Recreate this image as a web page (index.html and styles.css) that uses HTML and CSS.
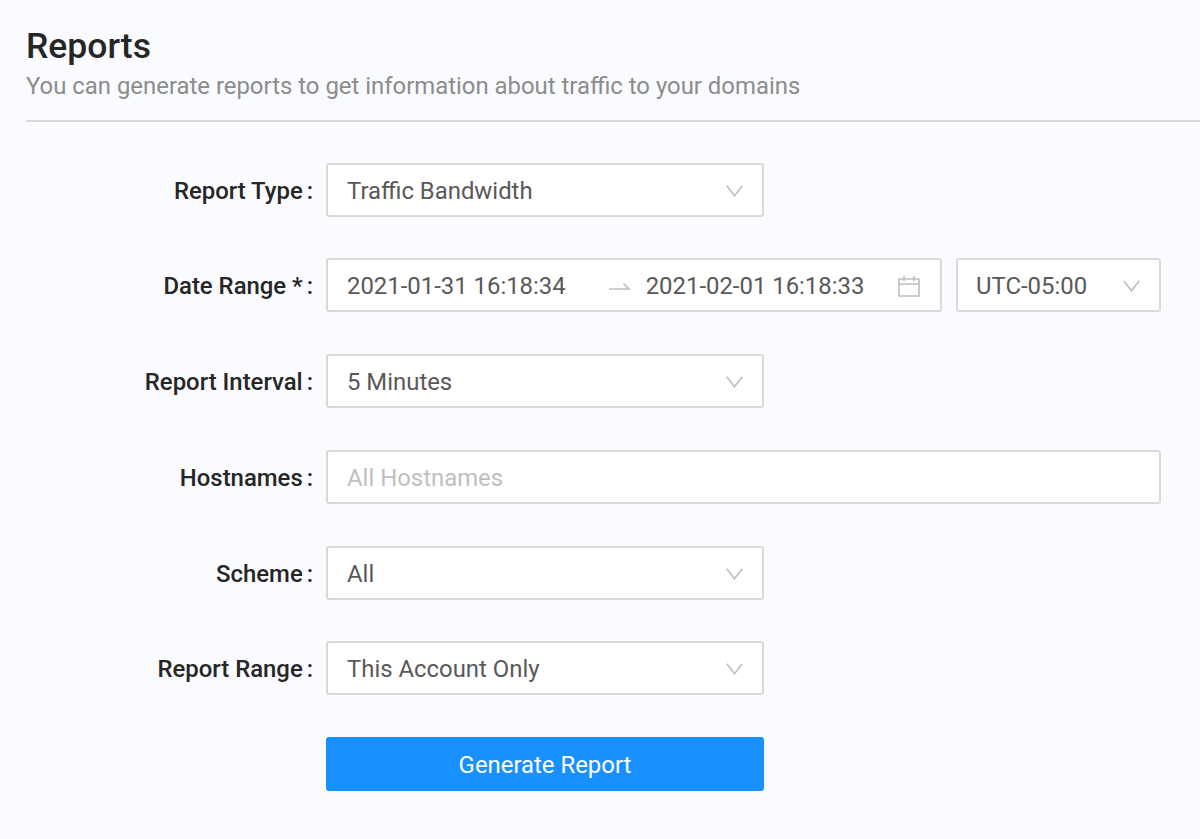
FILE: index.html
```html
<!DOCTYPE html>
<html>
<head>
    <title>Reports</title>
    <link rel="stylesheet" href="styles.css">
</head>
<body>
    <div id="content">
        <div class="page-header">
            <h1>Reports</h1>
            <p>You can generate reports to get information about traffic to your domains</p>
        </div>

        <form id="report-form">
            <div class="form-row">
                <label class="form-label">Report Type</label>
                <div class="select-box narrow">
                    <span class="value">Traffic Bandwidth</span>
                    <svg class="chevron" viewBox="0 0 17 12"><path d="M.8.8l7.7 10 7.7-10"/></svg>
                </div>
            </div>

            <div class="form-row">
                <label class="form-label">Date Range *</label>
                <div class="range-box">
                    <span class="range-value">2021-01-31 16:18:34</span>
                    <svg class="range-arrow" viewBox="0 0 21 8"><path d="M0 7h20L14.500 1.500"/></svg>
                    <span class="range-value">2021-02-01 16:18:33</span>
                    <svg class="calendar" viewBox="0 0 22 22"><path d="M1 4h20v17H1zM1 9h20M6 1v5M16 1v5"/></svg>
                </div>
                <div class="select-box zone">
                    <span class="value">UTC-05:00</span>
                    <svg class="chevron" viewBox="0 0 17 12"><path d="M.8.8l7.7 10 7.7-10"/></svg>
                </div>
            </div>

            <div class="form-row">
                <label class="form-label">Report Interval</label>
                <div class="select-box narrow">
                    <span class="value">5 Minutes</span>
                    <svg class="chevron" viewBox="0 0 17 12"><path d="M.8.8l7.7 10 7.7-10"/></svg>
                </div>
            </div>

            <div class="form-row">
                <label class="form-label" for="hostnames">Hostnames</label>
                <input type="text" id="hostnames" class="text-input" placeholder="All Hostnames">
            </div>

            <div class="form-row">
                <label class="form-label">Scheme</label>
                <div class="select-box narrow">
                    <span class="value">All</span>
                    <svg class="chevron" viewBox="0 0 17 12"><path d="M.8.8l7.7 10 7.7-10"/></svg>
                </div>
            </div>

            <div class="form-row">
                <label class="form-label">Report Range</label>
                <div class="select-box narrow">
                    <span class="value">This Account Only</span>
                    <svg class="chevron" viewBox="0 0 17 12"><path d="M.8.8l7.7 10 7.7-10"/></svg>
                </div>
            </div>

            <div class="form-row">
                <div class="form-label"></div>
                <button type="button" class="submit-button">Generate Report</button>
            </div>
        </form>
    </div>
</body>
</html>
```

FILE: styles.css
```css
body {
    font-family: Roboto, Arial, sans-serif;
    margin: 0;
    padding: 0;
    background-color: #fafbff;
    overflow: hidden;
}

#content {
    padding: 24px 39px 0 26px;
}

.page-header {
    border-bottom: 2px solid #d9d9d9;
    margin-right: -39px;
    padding-bottom: 16px;
}

.page-header h1 {
    margin: 0;
    font-size: 35.5px;
    line-height: 44px;
    font-weight: 500;
    color: #262626;
}

.page-header p {
    margin: 0;
    font-size: 23.9px;
    line-height: 36px;
    color: #8c8c8c;
}

#report-form {
    padding-top: 40.5px;
    display: flex;
    flex-direction: column;
    gap: 41.8px;
}

.form-row {
    display: flex;
    align-items: center;
    gap: 13px;
    height: 54px;
}

.form-label {
    flex: none;
    box-sizing: border-box;
    width: 287px;
    padding-top: 2px;
    text-align: right;
    font-size: 23.9px;
    font-weight: 500;
    color: #262626;
}

label.form-label::after {
    content: ":";
    margin-left: 4px;
}

.select-box, .range-box, .text-input {
    box-sizing: border-box;
    height: 54px;
    background-color: #fff;
    border: 2px solid #d9d9d9;
    border-radius: 3px;
    font-family: inherit;
    font-size: 23.9px;
    color: #595959;
}

.select-box {
    display: flex;
    align-items: center;
    justify-content: space-between;
    padding: 2px 19px 0;
}

.narrow {
    width: 438px;
}

.zone {
    width: 205px;
    margin-left: 1px;
    padding-left: 18px;
}

.chevron {
    width: 17px;
    height: 12px;
    fill: none;
    stroke: #bfbfbf;
    stroke-width: 1.6;
}

.range-box {
    display: flex;
    align-items: center;
    width: 616px;
    padding: 2px 20px 0 19px;
}

.range-value {
    white-space: nowrap;
}

.range-arrow {
    width: 21px;
    height: 8px;
    margin: 0 16px 0 43px;
    fill: none;
    stroke: #bfbfbf;
    stroke-width: 1.6;
}

.calendar {
    width: 22px;
    height: 22px;
    margin-left: auto;
    fill: none;
    stroke: #bfbfbf;
    stroke-width: 1.6;
}

.text-input {
    width: 835px;
    padding: 2px 19px 0;
    outline: none;
}

.text-input::placeholder {
    color: #bfbfbf;
    opacity: 1;
}

.submit-button {
    width: 438px;
    height: 54px;
    padding: 2px 0 0;
    background-color: #1890ff;
    border: none;
    border-radius: 3px;
    box-shadow: 0 3px 0 rgba(0, 0, 0, 0.03);
    color: #fff;
    font-family: inherit;
    font-size: 23.9px;
    cursor: pointer;
}
```
